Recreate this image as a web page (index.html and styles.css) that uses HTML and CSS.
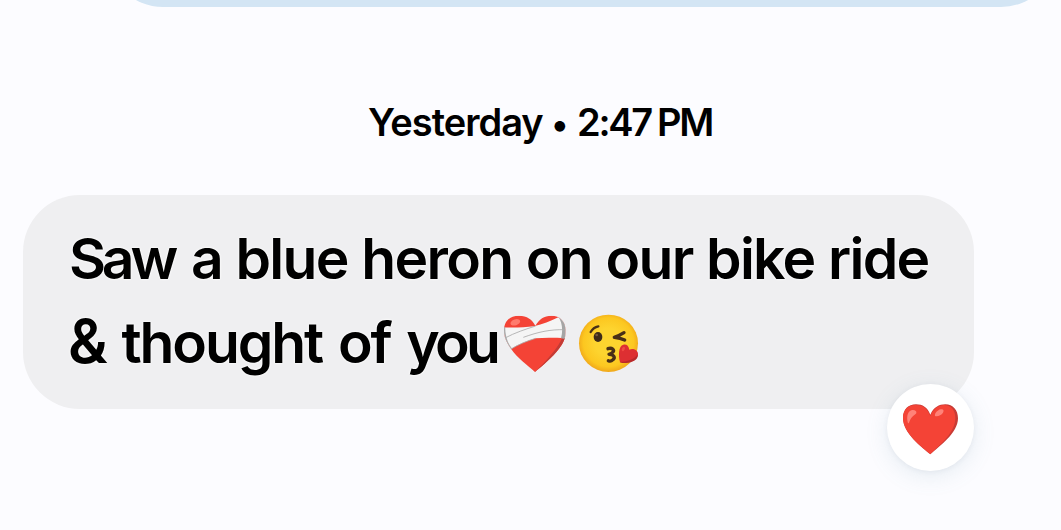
FILE: index.html
```
<!DOCTYPE html>
<html lang="en">
<head>
    <meta charset="UTF-8">
    <meta name="viewport" content="width=device-width, initial-scale=1.0">
    <title>Messages</title>
    <link rel="stylesheet" href="styles.css">
</head>
<body>
    <main class="conversation">
        <div class="bubble-sent"></div>

        <div class="timestamp"><span class="day">Yesterday</span> <span class="dot">•</span> <span class="time">2:47 PM</span></div>

        <div class="bubble-received">
            <div class="line line-first"><span class="first-word">Saw</span> a blue heron on our bike ride</div>
            <div class="line line-second"><span class="ampersand">&amp;</span> thought of <span class="last-word">you</span><svg class="emoji mending-heart" viewBox="39 42 192 177" role="img" aria-label="mending heart">
                    <defs>
                        <clipPath id="heartShape">
                            <path d="M135 216C114 196 82 174 63 146C48 125 42 111 42 91C42 65 59 47 87 47C111 47 126 58 136 77C148 57 162 47 184 47C210 47 227 65 227 92C227 113 221 128 207 146C187 173 157 196 135 216Z"/>
                        </clipPath>
                    </defs>
                    <g clip-path="url(#heartShape)">
                        <rect x="39" y="42" width="192" height="177" fill="#f44336"/>
                        <path d="M219 108C205 145 165 186 135 216L240 216V108Z" fill="#c33b35"/>
                        <ellipse cx="76" cy="67" rx="15" ry="9" fill="#ff7b6d" transform="rotate(-18 76 67)"/>
                        <path d="M39 82C72 84 103 82 132 79C158 72 181 64 205 52L232 60V115C195 113 165 112 137 115C108 123 85 134 63 147L39 154Z" fill="#f5f5f5"/>
                        <path d="M204 49C216 65 220 90 213 115L230 117V44Z" fill="#a5a5a5"/>
                        <path d="M43 115C77 97 106 88 137 78M63 147C86 133 111 123 137 115M100 112C145 96 178 88 227 89" fill="none" stroke="#aaa" stroke-width="2.5"/>
                        <path d="M43 81C43 111 50 130 64 147" fill="none" stroke="#aaa" stroke-width="5"/>
                    </g>
                </svg><svg class="emoji kiss-face" viewBox="264 42 186 177" role="img" aria-label="face blowing a kiss">
                    <defs>
                        <radialGradient id="faceFill" cx="50%" cy="48%" r="52%">
                            <stop offset="0.45" stop-color="#fdd42f"/>
                            <stop offset="0.82" stop-color="#fcc720"/>
                            <stop offset="1" stop-color="#f0a71b"/>
                        </radialGradient>
                    </defs>
                    <ellipse cx="355.5" cy="130" rx="88.5" ry="86" fill="url(#faceFill)"/>
                    <path d="M302 96C307 87 315 81 325 79" fill="none" stroke="#493017" stroke-width="7" stroke-linecap="round"/>
                    <ellipse cx="324" cy="111" rx="13" ry="15" fill="#3e2b19"/>
                    <ellipse cx="320" cy="105" rx="4" ry="4" fill="#75583c"/>
                    <path d="M402 98C391 105 381 109 373 112C384 113 394 115 404 120" fill="none" stroke="#493017" stroke-width="10" stroke-linecap="round" stroke-linejoin="round"/>
                    <path d="M354 146C366 142 375 150 369 156C366 160 360 162 357 163C371 163 377 172 369 179C364 184 359 184 355 182" fill="none" stroke="#493017" stroke-width="10" stroke-linecap="round" stroke-linejoin="round"/>
                    <path d="M390 186C385 168 385 136 400 134C410 132 416 138 418 149C429 144 443 150 444 161C445 174 432 183 417 186C407 188 398 188 390 186Z" fill="#dd2f32"/>
                    <path d="M389 186C411 185 432 180 443 163C445 177 433 185 416 188C403 190 393 190 389 186Z" fill="#b9292b"/>
                    <ellipse cx="400" cy="147" rx="4" ry="7" fill="#f04a42" transform="rotate(28 400 147)"/>
                </svg></div>

            <div class="reaction">
                <svg viewBox="96 100 171 156" role="img" aria-label="red heart">
                    <path d="M181 254C157 234 99 191 99 145C99 119 115 104 138 104C158 104 172 113 181 135C191 113 207 104 226 104C249 104 264 121 264 146C264 190 208 230 181 254Z" fill="#c83b35"/>
                    <path d="M181 253C157 233 99 191 99 145C99 120 115 106 137 106C158 106 172 115 181 139C190 116 207 106 222 106C243 106 256 122 256 145C256 190 207 228 181 253Z" fill="#f44336"/>
                    <path d="M114 161C109 144 112 126 124 122C133 119 141 124 139 130C137 136 125 138 118 156C117 159 116 161 114 161Z" fill="#ff8278"/>
                    <path d="M195 139C193 131 203 121 212 119C220 117 223 122 219 129C214 137 202 142 195 139Z" fill="#ff8278"/>
                </svg>
            </div>
        </div>
    </main>
</body>
</html>
```
FILE: styles.css
```
body {
    margin: 0;
    background-color: #fcfcff;
    color: #000;
    font-family: Inter, "Open Sans", sans-serif;
    overflow: hidden;
}
.conversation {
    display: flex;
    flex-direction: column;
    height: 530px;
}
/* only the lower edge of the previous message is in view */
.bubble-sent {
    height: 112px;
    margin: -105px 4px 0 107px;
    border-radius: 56px;
    background-color: #d3e5f4;
    flex-shrink: 0;
}
.timestamp {
    height: 50px;
    margin: 90px 0 0 368px;
    font-size: 38px;
    font-weight: 600;
    line-height: 50px;
    white-space: nowrap;
    letter-spacing: -1px;
}
.dot {
    font-size: 34px;
    margin: 0 1px 0 0;
}
.time {
    letter-spacing: -2.3px;
    word-spacing: -1px;
}
.bubble-received {
    position: relative;
    box-sizing: border-box;
    width: 951px;
    height: 214px;
    margin: 48px 0 0 23px;
    padding: 22px 46px 0;
    border-radius: 57px;
    background-color: #efeff1;
}
.line {
    height: 84px;
    font-size: 57px;
    font-weight: 600;
    line-height: 84px;
    white-space: nowrap;
    text-shadow: 0 0 3px #fff, 0 0 2px #fff;
}
.line-first {
    letter-spacing: -1.7px;
    word-spacing: 0.8px;
}
.first-word {
    margin-right: 3.5px;
    letter-spacing: -4.2px;
}
.line-second {
    letter-spacing: -2.1px;
    word-spacing: 3.5px;
}
.ampersand {
    font-size: 60px;
    line-height: 1;
    margin: 0 0 0 -1px;
}
.last-word {
    letter-spacing: -3.7px;
}
.emoji {
    height: 59px;
    vertical-align: -10px;
}
.mending-heart {
    width: 64px;
    margin-left: 5.5px;
}
.kiss-face {
    width: 62px;
    margin-left: 11px;
}
.reaction {
    position: absolute;
    right: 0;
    bottom: -62px;
    display: flex;
    align-items: center;
    justify-content: center;
    width: 87px;
    height: 87px;
    border-radius: 50%;
    background-color: #fff;
    box-shadow: 0 5px 22px rgba(100, 150, 170, 0.15), 0 1px 5px rgba(80, 90, 120, 0.07);
}
.reaction svg {
    width: 57px;
    height: 52px;
    margin-top: 2px;
}
```
